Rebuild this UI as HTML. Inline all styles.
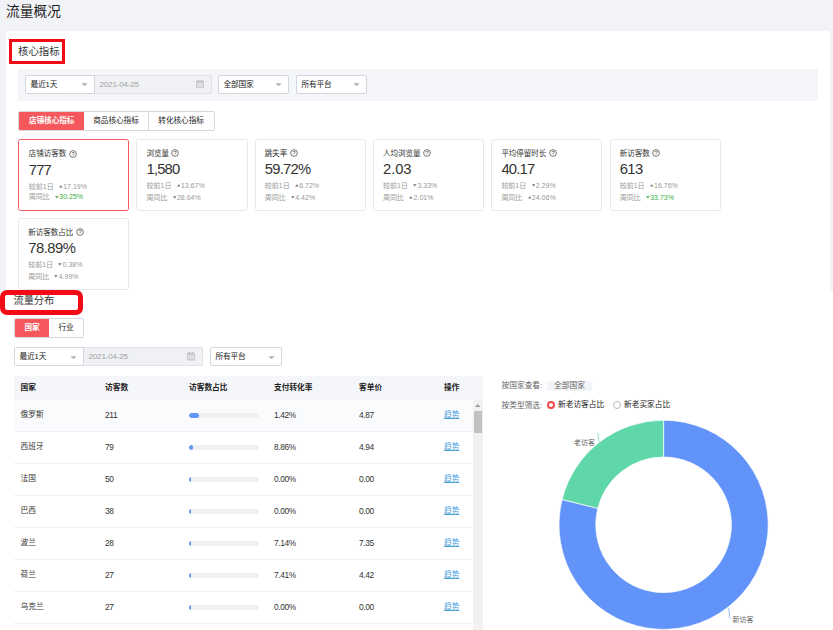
<!DOCTYPE html><html lang="zh-CN"><head><meta charset="utf-8"><title>流量概况</title><style>*{box-sizing:border-box;margin:0;padding:0}
html,body{width:833px;height:630px;overflow:hidden;background:#fff}
body{position:relative;font-family:"Liberation Sans","Noto Sans CJK SC",sans-serif;font-size:7.7px;color:#333}
#top{position:absolute;left:0;top:0;width:833px;height:291.5px;background:#f2f3f7;overflow:hidden}
.title{position:absolute;left:6.1px;top:2.4px;font-size:13.7px;line-height:20px;color:#1c1c1c}
.panel{position:absolute;left:5.5px;top:31.2px;width:824.5px;height:270px;background:#fff;border-radius:3px}
.redbox1{position:absolute;left:9.2px;top:39px;width:55.6px;height:24.6px;border:3px solid #f20a16}
.h2a{position:absolute;left:18px;top:44px;font-size:10.4px;line-height:15px;color:#333}
.fbar{position:absolute;left:18px;top:69px;width:800px;height:32.2px;background:#f5f6fa}
.sel{position:absolute;background:#fff;border:0.7px solid #d3d6dc;border-radius:2px;line-height:18.6px;padding-left:4.6px;color:#222}
.sel.l{border-radius:1.5px 0 0 1.5px}
.sel span{letter-spacing:-0.2px}
.caret{position:absolute;right:5.8px;top:7.3px;width:7px;height:3.3px;fill:#b2b2b2}
.date span{font-size:8.1px;letter-spacing:-0.2px}
.date{position:absolute;background:#f0f1f4;border:0.7px solid #e0e2e7;border-left:none;border-radius:0 2px 2px 0;line-height:18.4px;padding-left:5px;color:#a2a2a2}
.cal{position:absolute;right:6.6px;top:3.9px;width:8px;height:8.4px}
.tabs{position:absolute;display:flex;border:0.7px solid #d5d7dc;border-radius:2px;background:#fff;overflow:hidden}
.tab{height:100%;text-align:center;line-height:18px;border-right:0.7px solid #d5d7dc;color:#222;letter-spacing:-0.1px}
.tab:last-child{border-right:none}
.tab.on{background:#f5585c;color:#fff;font-weight:bold;border-right:none}
.card{position:absolute;width:111.3px;height:71.6px;background:#fff;border:0.7px solid #e8e9ed;border-radius:2.5px}
.card.on{border:1.2px solid #f5585c}
.card>div{position:absolute;left:9.2px;white-space:nowrap}
.card.on>div{left:9.8px;margin-top:0.6px}
.card.on>div.l2{margin-top:-0.3px}
.lab{top:7.3px;line-height:12px;height:12px;color:#333;font-size:7.5px}
.q{width:8px;height:8px;vertical-align:-1.6px;margin-left:2.4px}
.num{top:18.9px;font-size:14.8px;line-height:20px;color:#333}
.ln{line-height:10px;height:10px;color:#999;font-size:7px}
.ln.l1{top:40.9px}
.ln.l2{top:52.4px}
.ln .lb{display:inline-block;margin-right:5.3px}
.ln.g .v{color:#3cb043}
.ar{width:3.7px;height:2.8px;fill:#777;vertical-align:1.1px;margin-right:0.5px}
.ln.g .ar{fill:#3cb043}
.redbox2{position:absolute;left:0;top:289.5px;width:83.2px;height:25.7px;border:5.3px solid #f20a16;border-radius:7px;background:#fff}
.h2b{position:absolute;left:13.5px;top:293.2px;font-size:10.2px;line-height:15px;color:#333}
.thead{position:absolute;left:14px;top:376px;width:469px;height:24px;background:#f5f6fa;font-weight:bold;color:#222}
.thead span,.tr span{position:absolute;top:0;line-height:24px;white-space:nowrap}
.tr{position:absolute;left:14px;width:459px;height:32px;border-bottom:0.7px solid #eff0f3;color:#333}
.tr.hv{background:#fafbfc}
.tr span{line-height:30.5px}
.tr span.n{font-size:8.4px;letter-spacing:-0.4px}
.tr .lk{color:#4ba0da;text-decoration:underline;text-decoration-thickness:0.5px;text-underline-offset:0.8px}
.bar{position:absolute;left:175px;top:13.4px;width:70px;height:5px;border-radius:2.5px;background:#f0f0f2;overflow:hidden}
.bar div{height:100%;border-radius:2.5px;background:#6495f9}
.sb{position:absolute;left:473px;top:400px;width:9.7px;height:230px;background:#f1f1f1}
.sbup{position:absolute;left:2.1px;top:4.3px;width:5.6px;height:3.2px;fill:#9a9a9a}
.thumb{position:absolute;left:1.2px;top:11px;width:7.6px;height:21.5px;background:#c1c1c1}
.rt1,.rt2,.rl{position:absolute;line-height:12px;color:#555;white-space:nowrap}
.rt1{left:501.6px;top:379.7px;color:#666}
.rt2{left:501.6px;top:399.5px;color:#666}
.chip{position:absolute;left:547px;top:380.5px;width:45px;height:10px;line-height:10px;background:#f3f4f8;border-radius:1.5px;text-align:center;color:#666}
.radio{position:absolute;top:401px;width:8px;height:8px;border-radius:50%;border:0.8px solid #bbb;background:#fff}
.radio.on{border:2.2px solid #f5484e}
.rl{top:399px;color:#222}
.pie{position:absolute;left:0;top:0;font-family:"Liberation Sans","Noto Sans CJK SC",sans-serif}
</style></head><body>
<div id="top"><div class="title">流量概况</div><div class="panel"></div>
<div class="redbox1"></div><div class="h2a">核心指标</div>
<div class="fbar"></div>
<div class="sel l" style="left:25px;top:75.1px;width:69.5px;height:19px"><span>最近1天</span><svg class="caret" viewBox="0 0 7 3.4"><path d="M0.2 0.2L6.8 0.2L3.5 3.3Z"/></svg></div>
<div class="date" style="left:94.5px;top:75.1px;width:117.5px;height:19px"><span>2021-04-25</span><svg class="cal" viewBox="0 0 8 8.4"><rect x="1.7" y="0" width="1.1" height="1.6" fill="#bbb"/><rect x="5.2" y="0" width="1.1" height="1.6" fill="#bbb"/><rect x="0.4" y="1.1" width="7.2" height="6.9" rx="0.5" fill="#dcdde0" stroke="#bbb" stroke-width="0.8"/><rect x="0.4" y="1.1" width="7.2" height="1.6" fill="#c6c6c6"/></svg></div>
<div class="sel " style="left:218px;top:75.1px;width:71px;height:19px"><span>全部国家</span><svg class="caret" viewBox="0 0 7 3.4"><path d="M0.2 0.2L6.8 0.2L3.5 3.3Z"/></svg></div>
<div class="sel " style="left:296px;top:75.1px;width:71px;height:19px"><span>所有平台</span><svg class="caret" viewBox="0 0 7 3.4"><path d="M0.2 0.2L6.8 0.2L3.5 3.3Z"/></svg></div>
<div class="tabs" style="left:18px;top:111px;width:196.5px;height:19.5px"><div class="tab on" style="width:66px">店铺核心指标</div><div class="tab" style="width:65px">商品核心指标</div><div class="tab" style="width:65.5px">转化核心指标</div></div>
<div class="card on" style="left:18.0px;top:139.4px"><div class="lab">店铺访客数<svg class="q" viewBox="0 0 10 10"><circle cx="5" cy="5" r="4.2" fill="none" stroke="#444" stroke-width="0.9"/><text x="5" y="7.6" font-size="7" text-anchor="middle" fill="#444" font-family="Liberation Sans, sans-serif">?</text></svg></div><div class="num" style="letter-spacing:-0.85px">777</div><div class="ln l1 "><span class="lb">较前1日</span><svg class="ar" viewBox="0 0 4 3"><path d="M0 2.8L2 0.3L4 2.8Z"/></svg><span class="v">17.19%</span></div><div class="ln l2 g"><span class="lb">周同比</span><svg class="ar" viewBox="0 0 4 3"><path d="M0 0.2L2 2.7L4 0.2Z"/></svg><span class="v">30.25%</span></div></div>
<div class="card" style="left:136.3px;top:139.4px"><div class="lab">浏览量<svg class="q" viewBox="0 0 10 10"><circle cx="5" cy="5" r="4.2" fill="none" stroke="#444" stroke-width="0.9"/><text x="5" y="7.6" font-size="7" text-anchor="middle" fill="#444" font-family="Liberation Sans, sans-serif">?</text></svg></div><div class="num" style="letter-spacing:-0.83px">1,580</div><div class="ln l1 "><span class="lb">较前1日</span><svg class="ar" viewBox="0 0 4 3"><path d="M0 2.8L2 0.3L4 2.8Z"/></svg><span class="v">13.67%</span></div><div class="ln l2 "><span class="lb">周同比</span><svg class="ar" viewBox="0 0 4 3"><path d="M0 0.2L2 2.7L4 0.2Z"/></svg><span class="v">28.64%</span></div></div>
<div class="card" style="left:254.6px;top:139.4px"><div class="lab">跳失率<svg class="q" viewBox="0 0 10 10"><circle cx="5" cy="5" r="4.2" fill="none" stroke="#444" stroke-width="0.9"/><text x="5" y="7.6" font-size="7" text-anchor="middle" fill="#444" font-family="Liberation Sans, sans-serif">?</text></svg></div><div class="num" style="letter-spacing:-0.76px">59.72%</div><div class="ln l1 "><span class="lb">较前1日</span><svg class="ar" viewBox="0 0 4 3"><path d="M0 2.8L2 0.3L4 2.8Z"/></svg><span class="v">6.72%</span></div><div class="ln l2 "><span class="lb">周同比</span><svg class="ar" viewBox="0 0 4 3"><path d="M0 0.2L2 2.7L4 0.2Z"/></svg><span class="v">4.42%</span></div></div>
<div class="card" style="left:372.9px;top:139.4px"><div class="lab">人均浏览量<svg class="q" viewBox="0 0 10 10"><circle cx="5" cy="5" r="4.2" fill="none" stroke="#444" stroke-width="0.9"/><text x="5" y="7.6" font-size="7" text-anchor="middle" fill="#444" font-family="Liberation Sans, sans-serif">?</text></svg></div><div class="num" style="letter-spacing:-0.10px">2.03</div><div class="ln l1 "><span class="lb">较前1日</span><svg class="ar" viewBox="0 0 4 3"><path d="M0 0.2L2 2.7L4 0.2Z"/></svg><span class="v">3.33%</span></div><div class="ln l2 "><span class="lb">周同比</span><svg class="ar" viewBox="0 0 4 3"><path d="M0 2.8L2 0.3L4 2.8Z"/></svg><span class="v">2.01%</span></div></div>
<div class="card" style="left:491.2px;top:139.4px"><div class="lab">平均停留时长<svg class="q" viewBox="0 0 10 10"><circle cx="5" cy="5" r="4.2" fill="none" stroke="#444" stroke-width="0.9"/><text x="5" y="7.6" font-size="7" text-anchor="middle" fill="#444" font-family="Liberation Sans, sans-serif">?</text></svg></div><div class="num" style="letter-spacing:-0.78px">40.17</div><div class="ln l1 "><span class="lb">较前1日</span><svg class="ar" viewBox="0 0 4 3"><path d="M0 0.2L2 2.7L4 0.2Z"/></svg><span class="v">2.29%</span></div><div class="ln l2 "><span class="lb">周同比</span><svg class="ar" viewBox="0 0 4 3"><path d="M0 2.8L2 0.3L4 2.8Z"/></svg><span class="v">24.06%</span></div></div>
<div class="card" style="left:609.5px;top:139.4px"><div class="lab">新访客数<svg class="q" viewBox="0 0 10 10"><circle cx="5" cy="5" r="4.2" fill="none" stroke="#444" stroke-width="0.9"/><text x="5" y="7.6" font-size="7" text-anchor="middle" fill="#444" font-family="Liberation Sans, sans-serif">?</text></svg></div><div class="num" style="letter-spacing:-0.55px">613</div><div class="ln l1 "><span class="lb">较前1日</span><svg class="ar" viewBox="0 0 4 3"><path d="M0 2.8L2 0.3L4 2.8Z"/></svg><span class="v">16.76%</span></div><div class="ln l2 g"><span class="lb">周同比</span><svg class="ar" viewBox="0 0 4 3"><path d="M0 0.2L2 2.7L4 0.2Z"/></svg><span class="v">33.73%</span></div></div>
<div class="card" style="left:18.0px;top:218.4px"><div class="lab">新访客数占比<svg class="q" viewBox="0 0 10 10"><circle cx="5" cy="5" r="4.2" fill="none" stroke="#444" stroke-width="0.9"/><text x="5" y="7.6" font-size="7" text-anchor="middle" fill="#444" font-family="Liberation Sans, sans-serif">?</text></svg></div><div class="num" style="letter-spacing:-0.50px">78.89%</div><div class="ln l1 "><span class="lb">较前1日</span><svg class="ar" viewBox="0 0 4 3"><path d="M0 0.2L2 2.7L4 0.2Z"/></svg><span class="v">0.38%</span></div><div class="ln l2 "><span class="lb">周同比</span><svg class="ar" viewBox="0 0 4 3"><path d="M0 0.2L2 2.7L4 0.2Z"/></svg><span class="v">4.99%</span></div></div>
</div>
<div class="redbox2"></div><div class="h2b">流量分布</div>
<div class="tabs" style="left:14px;top:318px;width:70px;height:19.5px"><div class="tab on" style="width:35px">国家</div><div class="tab" style="width:35px">行业</div></div>
<div class="sel l" style="left:14px;top:347.3px;width:69.5px;height:19px"><span>最近1天</span><svg class="caret" viewBox="0 0 7 3.4"><path d="M0.2 0.2L6.8 0.2L3.5 3.3Z"/></svg></div>
<div class="date" style="left:83.5px;top:347.3px;width:119px;height:19px"><span>2021-04-25</span><svg class="cal" viewBox="0 0 8 8.4"><rect x="1.7" y="0" width="1.1" height="1.6" fill="#bbb"/><rect x="5.2" y="0" width="1.1" height="1.6" fill="#bbb"/><rect x="0.4" y="1.1" width="7.2" height="6.9" rx="0.5" fill="#dcdde0" stroke="#bbb" stroke-width="0.8"/><rect x="0.4" y="1.1" width="7.2" height="1.6" fill="#c6c6c6"/></svg></div>
<div class="sel " style="left:210px;top:347.3px;width:72px;height:19px"><span>所有平台</span><svg class="caret" viewBox="0 0 7 3.4"><path d="M0.2 0.2L6.8 0.2L3.5 3.3Z"/></svg></div>
<div class="thead"><span style="left:6.5px">国家</span><span style="left:91px">访客数</span><span style="left:175px">访客数占比</span><span style="left:260px">支付转化率</span><span style="left:345px">客单价</span><span style="left:430px">操作</span></div>
<div class="tr hv" style="top:400px"><span style="left:6.5px">俄罗斯</span><span class="n" style="left:91px">211</span><div class="bar"><div style="width:10px"></div></div><span class="n" style="left:260px">1.42%</span><span class="n" style="left:345px">4.87</span><span class="lk" style="left:430px">趋势</span></div>
<div class="tr" style="top:432px"><span style="left:6.5px">西班牙</span><span class="n" style="left:91px">79</span><div class="bar"><div style="width:3.7px"></div></div><span class="n" style="left:260px">8.86%</span><span class="n" style="left:345px">4.94</span><span class="lk" style="left:430px">趋势</span></div>
<div class="tr" style="top:464px"><span style="left:6.5px">法国</span><span class="n" style="left:91px">50</span><div class="bar"><div style="width:2.3px"></div></div><span class="n" style="left:260px">0.00%</span><span class="n" style="left:345px">0.00</span><span class="lk" style="left:430px">趋势</span></div>
<div class="tr" style="top:496px"><span style="left:6.5px">巴西</span><span class="n" style="left:91px">38</span><div class="bar"><div style="width:2.1px"></div></div><span class="n" style="left:260px">0.00%</span><span class="n" style="left:345px">0.00</span><span class="lk" style="left:430px">趋势</span></div>
<div class="tr" style="top:528px"><span style="left:6.5px">波兰</span><span class="n" style="left:91px">28</span><div class="bar"><div style="width:1.9px"></div></div><span class="n" style="left:260px">7.14%</span><span class="n" style="left:345px">7.35</span><span class="lk" style="left:430px">趋势</span></div>
<div class="tr" style="top:560px"><span style="left:6.5px">荷兰</span><span class="n" style="left:91px">27</span><div class="bar"><div style="width:1.9px"></div></div><span class="n" style="left:260px">7.41%</span><span class="n" style="left:345px">4.42</span><span class="lk" style="left:430px">趋势</span></div>
<div class="tr" style="top:592px"><span style="left:6.5px">乌克兰</span><span class="n" style="left:91px">27</span><div class="bar"><div style="width:1.9px"></div></div><span class="n" style="left:260px">0.00%</span><span class="n" style="left:345px">0.00</span><span class="lk" style="left:430px">趋势</span></div>
<div class="sb"><svg class="sbup" viewBox="0 0 5.6 3.2"><path d="M0 3.1L2.8 0.1L5.6 3.1Z"/></svg><div class="thumb"></div></div>
<div class="rt1">按国家查看:</div><div class="chip">全部国家</div>
<div class="rt2">按类型筛选:</div><div class="radio on" style="left:547px"></div><div class="rl" style="left:558px">新老访客占比</div><div class="radio" style="left:613.1px"></div><div class="rl" style="left:624px">新老买家占比</div>
<svg class="pie" width="833" height="630" viewBox="0 0 833 630"><path d="M663.60 420.20A104.6 104.6 0 1 1 562.11 499.49L597.82 508.39A67.8 67.8 0 1 0 663.60 457.00Z" fill="#6293f8" stroke="#fff" stroke-width="0.7"/><path d="M562.11 499.49A104.6 104.6 0 0 1 663.60 420.20L663.60 457.00A67.8 67.8 0 0 0 597.82 508.39Z" fill="#60d7a9" stroke="#fff" stroke-width="0.7"/><path d="M597 432.5 Q598.6 433.5 598.3 437 Q598 441 599.5 442" fill="none" stroke="#60d7a9" stroke-width="0.7"/><path d="M728 608 Q729.5 609 729.3 613 Q729 617.5 730.5 618.5" fill="none" stroke="#6293f8" stroke-width="0.7"/><text x="574" y="445" font-size="7" fill="#666">老访客</text><text x="732.5" y="622" font-size="7" fill="#666">新访客</text></svg>
</body></html>
